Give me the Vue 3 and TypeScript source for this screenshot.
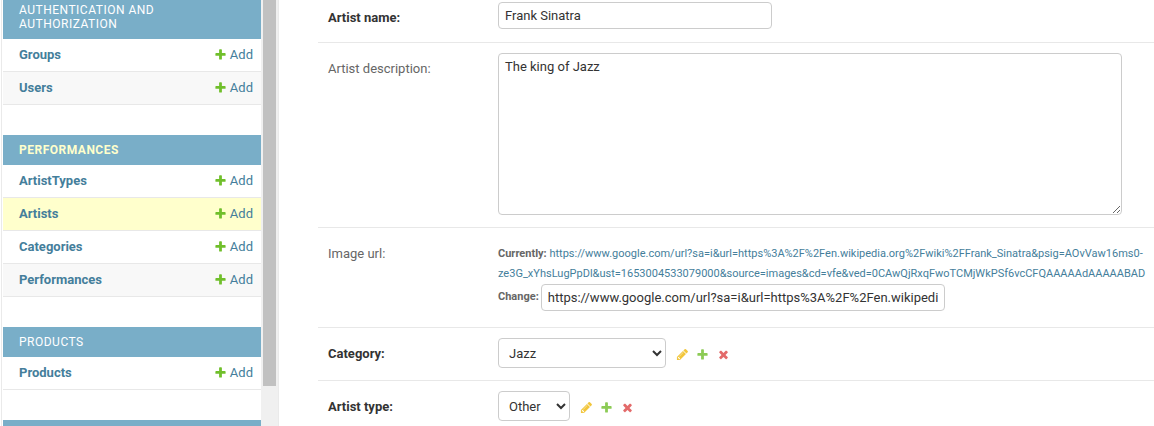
<script setup lang="ts">
import { ref } from 'vue'

interface NavItem { name: string; current?: boolean; shaded?: boolean }
interface NavGroup { title: string; kind?: string; items: NavItem[] }

const groups: NavGroup[] = [
  { title: 'Authentication and Authorization', kind: 'first', items: [{ name: 'Groups' }, { name: 'Users', shaded: true }] },
  {
    title: 'Performances',
    kind: 'active',
    items: [
      { name: 'ArtistTypes' },
      { name: 'Artists', current: true },
      { name: 'Categories' },
      { name: 'Performances', shaded: true },
    ],
  },
  { title: 'Products', items: [{ name: 'Products' }] },
  { title: '', items: [] },
]

const icons = {
  add: 'M1600 796v192q0 40-28 68t-68 28h-416v416q0 40-28 68t-68 28H800q-40 0-68-28t-28-68v-416H288q-40 0-68-28t-28-68V796q0-40 28-68t68-28h416V284q0-40 28-68t68-28h192q40 0 68 28t28 68v416h416q40 0 68 28t28 68z',
  edit: 'M491 1536l91-91-235-235-91 91v107h128v128h107zm523-928q0-22-22-22-10 0-17 7l-542 542q-7 7-7 17 0 22 22 22 10 0 17-7l542-542q7-7 7-17zm-54-192l416 416-832 832H128v-416zm683 96q0 53-37 90l-166 166-416-416 166-165q36-38 90-38 53 0 91 38l235 234q37 39 37 91z',
  remove: 'M1490 1322q0 40-28 68l-136 136q-28 28-68 28t-68-28l-294-294-294 294q-28 28-68 28t-68-28l-136-136q-28-28-28-68t28-68l294-294-294-294q-28-28-28-68t28-68l136-136q28-28 68-28t68 28l294 294 294-294q28-28 68-28t68 28l136 136q28 28 28 68t-28 68l-294 294 294 294q28 28 28 68z',
}

const selects = [
  { label: 'Category:', value: 'Jazz', kind: 'wide' },
  { label: 'Artist type:', value: 'Other', kind: 'narrow' },
]

const name = ref('Frank Sinatra')
const description = ref('The king of Jazz')
const change = ref('https://www.google.com/url?sa=i&url=https%3A%2F%2Fen.wikipedi')
const currentStart = 'https://www.google.com/url?sa=i&url=https%3A%2F%2Fen.wikipedia.org%2Fwiki%2FFrank_Sinatra&psig=AOvVaw16ms0-'
const currentEnd = 'ze3G_xYhsLugPpDl&ust=1653004533079000&source=images&cd=vfe&ved=0CAwQjRxqFwoTCMjWkPSf6vcCFQAAAAAdAAAAABAD'
</script>

<template>
  <div class="page">
    <nav class="sidebar">
      <div class="modules">
        <section v-for="(g, i) in groups" :key="i" class="module" :class="g.kind">
          <h2>{{ g.title }}</h2>
          <div v-for="item in g.items" :key="item.name" class="row" :class="{ current: item.current, shaded: item.shaded }">
            <a class="model">{{ item.name }}</a>
            <a class="add">
              <svg viewBox="0 0 1792 1792"><path :d="icons.add" /></svg>
              <span>Add</span>
            </a>
          </div>
        </section>
      </div>
      <div class="track"><div class="thumb"></div></div>
    </nav>

    <main class="form">
      <div class="field name-field">
        <label class="required">Artist name:</label>
        <input v-model="name" class="name-input" type="text" />
      </div>
      <div class="field desc-field">
        <label>Artist description:</label>
        <textarea v-model="description"></textarea>
      </div>
      <div class="field url-field">
        <label>Image url:</label>
        <div class="url">
          <div class="line"><b>Currently:</b> <a>{{ currentStart }}</a></div>
          <div class="line"><a>{{ currentEnd }}</a></div>
          <div class="change"><b>Change:</b><input v-model="change" type="text" /></div>
        </div>
      </div>
      <div v-for="s in selects" :key="s.label" class="field select-field">
        <label class="required">{{ s.label }}</label>
        <select :class="s.kind"><option>{{ s.value }}</option></select>
        <span class="tools">
          <svg class="edit" viewBox="0 0 1792 1792"><path :d="icons.edit" /></svg>
          <svg class="plus" viewBox="0 0 1792 1792"><path :d="icons.add" /></svg>
          <svg class="remove" viewBox="0 0 1792 1792"><path :d="icons.remove" /></svg>
        </span>
      </div>
    </main>
  </div>
</template>

<style>
body { background: #fff; overflow: hidden; }
</style>

<style scoped>
* { box-sizing: border-box; }
.page { display: flex; width: 1154px; height: 426px; overflow: hidden; font: 13px/16px Roboto, "Liberation Sans", sans-serif; color: #333; }
.sidebar { display: flex; flex: none; width: 278px; margin-left: 1px; border-left: 1px solid #eaeaea; border-right: 1px solid #eaeaea; }
.modules { width: 258px; margin-left: 1px; flex: none; }
.module { margin-bottom: 30px; }
.module h2 { margin: 0; height: 30px; padding: 8px 16px; background: #79aec8; color: #fff; font-size: 12px; line-height: 14px; font-weight: 400; letter-spacing: 0.5px; text-transform: uppercase; }
.first h2 { height: 39px; padding: 3px 90px 8px 16px; }
.active h2 { color: #ffc; font-weight: 700; }
.row { display: flex; justify-content: space-between; align-items: center; height: 33px; padding: 0 8px 0 16px; border-bottom: 1px solid #e8e8e8; }
.row.shaded { background: #f8f8f8; }
.row.current { background: #ffc; }
.model { font-weight: 700; color: #447e9b; }
.add { display: flex; align-items: center; gap: 3px; color: #447e9b; }
.add svg { width: 13px; height: 13px; margin-bottom: 1px; fill: #70bf2b; }
.track { width: 17px; background: #f0f0f0; padding: 0 2px; }
.thumb { width: 13px; height: 386px; background: #c1c1c1; }

.form { width: 836px; margin-left: 39px; flex: none; }
.field { display: flex; align-items: flex-start; padding-left: 10px; border-bottom: 1px solid #e8e8e8; }
label { width: 170px; flex: none; color: #666; }
label.required { color: #333; font-weight: 700; }
input, textarea, select { margin: 0; border: 1px solid #ccc; border-radius: 4px; background: #fff; color: #333; font: 13px/16px Roboto, "Liberation Sans", sans-serif; outline: none; }
input { padding: 5px 6px; height: 27px; }
.name-field { height: 43px; padding-top: 2px; }
.name-field label { padding-top: 8px; }
.name-input { width: 274px; }
.desc-field { height: 185px; padding-top: 10px; }
.desc-field label { padding-top: 8px; }
textarea { width: 624px; height: 162px; padding: 5px 6px; resize: both; }
.url-field { height: 100px; padding-top: 16px; }
.url-field label { padding-top: 2px; }
.url { font-size: 11px; color: #666; white-space: nowrap; }
.line { height: 20px; line-height: 20px; }
.url a { color: #447e9b; }
.change { display: flex; gap: 2px; line-height: 25px; }
.change input { width: 404px; }
.select-field { height: 53px; padding-top: 10px; }
.select-field label { padding-top: 8px; }
select { height: 30px; padding: 3px 6px; }
.wide { width: 168px; }
.narrow { width: 72px; }
.tools { display: flex; gap: 7px; margin: 10px 0 0 10px; }
.tools svg { width: 13px; height: 13px; opacity: 0.8; }
.edit { fill: #efb80b; }
.plus { fill: #70bf2b; }
.tools .remove { fill: #dd4646; margin-left: 0.5px; }
</style>
